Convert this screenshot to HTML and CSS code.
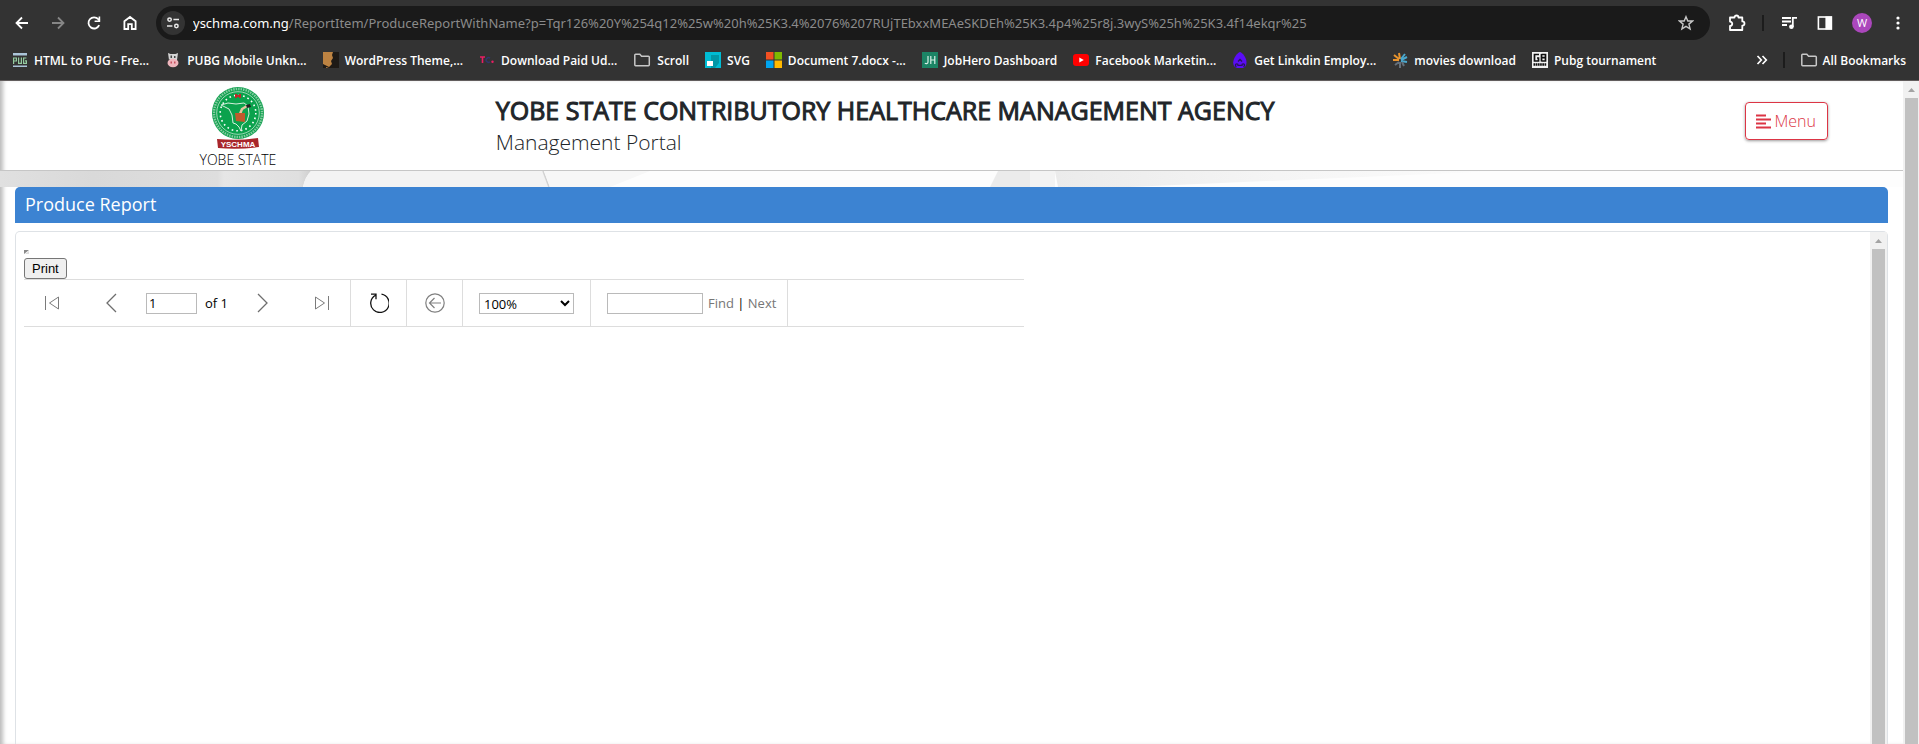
FILE: index.html
```html
<!DOCTYPE html>
<html lang="en">
<head>
<meta charset="utf-8">
<title>Produce Report</title>
<link rel="stylesheet" href="styles.css">
</head>
<body>
<div class="chrome">
  <div class="nav-row">
    <button class="icon-btn" aria-label="Back"><svg width="16" height="16" viewBox="0 0 16 16"><path d="M14 8H3M8 2.5L2.5 8L8 13.5" fill="none" stroke="#fff" stroke-width="1.8"/></svg></button>
    <button class="icon-btn" aria-label="Forward"><svg width="16" height="16" viewBox="0 0 16 16"><path d="M2 8H13M8 2.5L13.5 8L8 13.5" fill="none" stroke="#868686" stroke-width="1.8"/></svg></button>
    <button class="icon-btn" aria-label="Reload"><svg width="16" height="16" viewBox="0 0 16 16"><path d="M13.2 10.2A5.6 5.6 0 1 1 12.3 4.2L13.6 5.6" fill="none" stroke="#fff" stroke-width="1.8"/><path d="M14.2 1.4V7H8.6V5.4H12.6V1.4Z" fill="#fff"/></svg></button>
    <button class="icon-btn" aria-label="Home"><svg width="16" height="16" viewBox="0 0 16 16"><path d="M2.4 14V6.3L8 2L13.6 6.3V14H9.8V9.2H6.2V14Z" fill="none" stroke="#fff" stroke-width="1.8"/></svg></button>
    <div class="omnibox">
      <button class="site-info" aria-label="Site information"><svg width="14" height="14" viewBox="0 0 14 14" fill="none" stroke="#e8e8e8" stroke-width="1.5"><circle cx="3.6" cy="3.6" r="1.7"/><path d="M7.4 3.6H13M1 10H6.4"/><circle cx="10.4" cy="10" r="1.7"/></svg></button>
      <div class="url" role="textbox" aria-label="Address"><span class="host">yschma.com.ng</span>/ReportItem/ProduceReportWithName?p=Tqr126%20Y%254q12%25w%20h%25K3.4%2076%207RUjTEbxxMEAeSKDEh%25K3.4p4%25r8j.3wyS%25h%25K3.4f14ekqr%25</div>
      <button class="star" aria-label="Bookmark this page"><svg width="16" height="16" viewBox="0 0 16 16"><path d="M8 1.7L9.8 6H14.6L10.9 9.1L12.1 13.9L8 11.3L3.9 13.9L5.1 9.1L1.4 6H6.2Z" fill="none" stroke="#c7c7c7" stroke-width="1.4"/></svg></button>
    </div>
    <div class="actions">
      <button class="action" aria-label="Extensions"><svg width="18" height="18" viewBox="0 0 18 18"><path d="M2 3.5H6.5C6.5 .8 10.5 .8 10.5 3.5H14.3V7.4C17.2 7.4 17.2 11.6 14.3 11.6V16H2V12C5 12 5 7.6 2 7.6Z" fill="none" stroke="#fff" stroke-width="1.8" stroke-linejoin="round"/></svg></button>
      <span class="rule"></span>
      <button class="action" aria-label="Media"><svg width="18" height="18" viewBox="0 0 18 18"><path d="M2 4H11M2 7.5H11M2 11H7" stroke="#fff" stroke-width="1.8"/><path d="M12.8 13V3.9H17" fill="none" stroke="#fff" stroke-width="1.8"/><circle cx="11.4" cy="12.8" r="2.3" fill="#fff"/></svg></button>
      <button class="action" aria-label="Side panel"><svg width="18" height="18" viewBox="0 0 18 18"><rect x="2.4" y="3" width="13" height="12" fill="none" stroke="#fff" stroke-width="1.6"/><path d="M9.4 2.5H16V15.5H9.4Z" fill="#fff"/></svg></button>
      <button class="avatar" aria-label="Profile">W</button>
      <button class="dots" aria-label="Browser menu"><svg width="16" height="16" viewBox="0 0 16 16" fill="#fff"><circle cx="8" cy="3" r="1.6"/><circle cx="8" cy="8" r="1.6"/><circle cx="8" cy="13" r="1.6"/></svg></button>
    </div>
  </div>
  <nav class="bookmarks" aria-label="Bookmarks">
    <a class="bm" href="#"><svg width="16" height="16" viewBox="0 0 16 16"><path d="M1 1H15V3.500H1ZM1 13.600H15V15H1Z" fill="#abc4d8"/><path d="M1.600 12V6H4.400V9H1.600M6.600 5.500V11.400H9.400V5.500M14.400 6H11.600V11.400H14.400V8.800H13" fill="none" stroke="#94cba0" stroke-width="1.200"/></svg><span>HTML to PUG - Fre...</span></a>
    <a class="bm" href="#"><svg width="16" height="16" viewBox="0 0 16 16"><path d="M3 1L5.500 2H10.500L13 1L12 8H4Z" fill="#d4d4d4"/><path d="M5.500 3.500H7V6H5.500ZM9 4H10.500V6H9ZM3 7H4.500V9H3Z" fill="#444"/><ellipse cx="8" cy="11" rx="5.500" ry="4.200" fill="#efb6bd"/><path d="M5.500 9.500H7V11.500H5.500ZM9 9.500H10.500V11.500H9Z" fill="#c84f5e"/></svg><span>PUBG Mobile Unkn...</span></a>
    <a class="bm" href="#"><svg width="16" height="16" viewBox="0 0 16 16"><path d="M0 0H16V16H0Z" fill="#1e1a16"/><path d="M0 0H10L9 3L10 6L8 9L9 12L6 15L0 12Z" fill="#bd8342"/><path d="M3 15L6 16H3Z" fill="#bd8342"/></svg><span>WordPress Theme,...</span></a>
    <a class="bm" href="#"><svg width="16" height="16" viewBox="0 0 16 16"><path d="M1 5H6M3.500 5V11" stroke="#e91e63" stroke-width="1.600"/><path d="M11 6.300A2.300 2.300 0 1 0 11 9.700" fill="none" stroke="#30376e" stroke-width="1.500"/><circle cx="13.500" cy="9.700" r="1.200" fill="#e91e63"/></svg><span>Download Paid Ud...</span></a>
    <a class="bm" href="#"><svg width="18" height="16" viewBox="0 0 18 16"><path d="M1.800 3C1.800 2.500 2 2.200 2.600 2.200H6.800L8.600 4.200H15.400C16 4.200 16.300 4.500 16.300 5V12.800C16.300 13.400 16 13.700 15.400 13.700H2.600C2 13.700 1.800 13.400 1.800 12.800Z" fill="none" stroke="#c7c7c7" stroke-width="1.500"/></svg><span>Scroll</span></a>
    <a class="bm" href="#"><svg width="16" height="16" viewBox="0 0 16 16"><path d="M0 0H16V16H0Z" fill="#00bcd4"/><path d="M6 3H14V11L10 16H6Z" fill="#0097a7"/><path d="M2 9H8V14H2Z" fill="#fff"/></svg><span>SVG</span></a>
    <a class="bm" href="#"><svg width="16" height="16" viewBox="0 0 16 16"><path d="M0 0H7.500V7.500H0Z" fill="#f25022"/><path d="M8.500 0H16V7.500H8.500Z" fill="#7fba00"/><path d="M0 8.500H7.500V16H0Z" fill="#00a4ef"/><path d="M8.500 8.500H16V16H8.500Z" fill="#ffb900"/></svg><span>Document 7.docx -...</span></a>
    <a class="bm" href="#"><svg width="16" height="16" viewBox="0 0 16 16"><path d="M0 0H16V16H0Z" fill="#1c8465"/><path d="M6 4V10C6 12 3.500 12 3 11M8.800 4V12M12.800 4V12M8.800 8H12.800" fill="none" stroke="#d8efe6" stroke-width="1.200"/></svg><span>JobHero Dashboard</span></a>
    <a class="bm" href="#"><svg width="16" height="16" viewBox="0 0 16 16"><rect y="2" width="16" height="12" rx="3" fill="#f00"/><path d="M6.300 5.500L10.800 8L6.300 10.500Z" fill="#fff"/></svg><span>Facebook Marketin...</span></a>
    <a class="bm" href="#"><svg width="16" height="16" viewBox="0 0 16 16"><path d="M8 0C11 1 14.500 6 14.500 10.500C14.500 13.500 13 15.500 11 16H5C2.500 15.500 1.200 13.500 1.200 10.500C1.500 6 5 1 8 0Z" fill="#5b0df5"/><path d="M4.500 14.500A1.300 1.300 0 1 1 6 13.300H10A1.300 1.300 0 1 1 11.400 14.500M6 9.500L8 7.500L10 9.500" fill="none" stroke="#29135e" stroke-width="1.300"/></svg><span>Get Linkdin Employ...</span></a>
    <a class="bm" href="#"><svg width="16" height="16" viewBox="0 0 16 16" fill="none" stroke-width="2"><path d="M8 7L7 1M7 7L2 3M7 8H1" stroke="#e9942e"/><path d="M9 7L13 2M9 8L15 5M9 9L15 10" stroke="#4aa9cf"/><path d="M7 10L3 13M8 10V16M10 10L12 14" stroke="#65707b"/></svg><span>movies download</span></a>
    <a class="bm" href="#"><svg width="16" height="16" viewBox="0 0 16 16"><path d="M0 0H16V16H0Z" fill="#f2f2f2"/><path d="M7 2.500H2.500V9H6.500V6H5M9.500 2V9.500M9.500 2.500H13.500V9H9.500M9.500 5.700H13.500" fill="none" stroke="#111" stroke-width="1.700"/><path d="M1.500 12.500H14.500" stroke="#111" stroke-width="2.500" stroke-dasharray="1.700 .5"/></svg><span>Pubg tournament</span></a>
    <span class="bm-end">
      <button class="more" aria-label="More bookmarks"><svg width="12" height="10" viewBox="0 0 12 10"><path d="M1.500 1L5.300 5L1.500 9M6.500 1L10.300 5L6.500 9" fill="none" stroke="#fff" stroke-width="1.700"/></svg></button>
      <span class="rule"></span>
      <a class="bm" href="#"><svg width="18" height="16" viewBox="0 0 18 16"><path d="M1.800 3C1.800 2.500 2 2.200 2.600 2.200H6.800L8.600 4.200H15.400C16 4.200 16.300 4.500 16.300 5V12.800C16.300 13.400 16 13.700 15.400 13.700H2.600C2 13.700 1.800 13.400 1.800 12.800Z" fill="none" stroke="#c7c7c7" stroke-width="1.500"/></svg><span>All Bookmarks</span></a>
    </span>
  </nav>
</div>
<div class="viewport">
  <div class="page">
    <header class="header">
      <div class="brand">
        <svg width="54" height="64" viewBox="0 0 54 64">
          <circle cx="27" cy="27" r="26" fill="#12a150"/>
          <circle cx="27" cy="27" r="24" fill="none" stroke="#84cba0" stroke-width="2.400" stroke-dasharray="1.500 1"/>
          <circle cx="27" cy="27" r="21.300" fill="#0ba24d" stroke="#d6eddc" stroke-width=".7"/>
          <circle cx="27" cy="27" r="17.800" fill="none" stroke="#fff" stroke-width="1.600" stroke-dasharray="1.600 3.060"/>
          <path d="M10 19L17 17L25 18L33 17L37 20L38 28L36 35L31 39L30 45L28 41L25 38L22 37L21 29L18 23Z" fill="none" stroke="#d5efdc" stroke-width="1"/>
          <path d="M29 28L31 23L36 20" fill="none" stroke="#e6c69f" stroke-width="2.500"/>
          <path d="M35 19L39 18L40 21L36 22Z" fill="#222"/>
          <path d="M24 27H34V36L25 35Z" fill="#c05a2c"/>
          <path d="M25 8V12M29 8V12M25 10H29" stroke="#be2828" stroke-width="2"/>
          <path d="M6 53Q27 55 47 52L48 61Q27 64 7 62Z" fill="#a9262b"/>
          <text x="27" y="61" class="ribbon">YSCHMA</text>
        </svg>
        <span>YOBE STATE</span>
      </div>
      <div class="titles">
        <h1>YOBE STATE CONTRIBUTORY HEALTHCARE MANAGEMENT AGENCY</h1>
        <p>Management Portal</p>
      </div>
      <button class="menu"><svg width="15" height="15" viewBox="0 0 15 15"><path d="M0 1.500H10M0 5.500H15M0 9.500H10M0 13.500H15" stroke="#dc3545" stroke-width="2"/></svg>Menu</button>
    </header>
    <svg class="photo" viewBox="0 0 1903 16" preserveAspectRatio="none" aria-hidden="true">
      <defs>
        <linearGradient id="base"><stop offset="0" stop-color="#e0e0e0"/><stop offset=".3" stop-color="#d9d9d9"/><stop offset=".7" stop-color="#dedede"/><stop offset=".72" stop-color="#e6e6e6"/><stop offset=".96" stop-color="#dfdfdf"/><stop offset="1" stop-color="#cfcfcf"/></linearGradient>
        <linearGradient id="grey"><stop offset="0" stop-color="#ebebeb"/><stop offset=".5" stop-color="#f5f5f5"/><stop offset="1" stop-color="#fcfcfc"/></linearGradient>
      </defs>
      <path d="M0 0H1903V16H0Z" fill="#fdfdfd"/>
      <path d="M0 0H311Q305 6 303 16H0Z" fill="url(#base)"/>
      <path d="M311 0H543L549 16H303Q305 6 311 0Z" fill="#f3f3f3"/>
      <path d="M543 0L549 16" stroke="#d2d2d2" stroke-width="1.500"/>
      <path d="M544 0H650L610 16H550Z" fill="#f7f7f7"/>
      <path d="M998 0H1030V16H990Z" fill="#ebebeb"/>
      <path d="M1030 0H1055V16H1030Z" fill="#f3f3f3"/>
      <path d="M1055 0H1500L1130 16H1058Z" fill="url(#grey)"/>
    </svg>
    <main class="content">
      <h2 class="bar">Produce Report</h2>
      <section class="panel">
        <div class="report">
          <svg class="broken" width="5" height="4" viewBox="0 0 5 4"><path d="M0 0H5L0 4Z" fill="#888"/><path d="M5 1V4H1Z" fill="#ddd"/></svg>
          <button class="print">Print</button>
          <div class="toolbar">
            <div class="group pager">
              <button class="tool" aria-label="First page"><svg width="16" height="16" viewBox="0 0 16 16" fill="none" stroke="#7b7b7b"><path d="M1.500 1V15M14.500 2V14L5.500 8Z"/></svg></button>
              <div class="paging">
                <button class="tool" aria-label="Previous page"><svg width="12" height="20" viewBox="0 0 12 20" fill="none" stroke="#6e6e6e" stroke-width="1.300"><path d="M11 1L2 10L11 19"/></svg></button>
                <label class="page-no"><input value="1" aria-label="Current page"><span>of 1</span></label>
                <button class="tool" aria-label="Next page"><svg width="12" height="20" viewBox="0 0 12 20" fill="none" stroke="#6e6e6e" stroke-width="1.300"><path d="M1 1L10 10L1 19"/></svg></button>
              </div>
              <button class="tool" aria-label="Last page"><svg width="16" height="16" viewBox="0 0 16 16" fill="none" stroke="#7b7b7b"><path d="M14.500 1V15M1.500 2V14L10.500 8Z"/></svg></button>
            </div>
            <div class="group single"><button class="tool" aria-label="Refresh"><svg width="20" height="20" viewBox="0 0 20 20" fill="none" stroke="#111" stroke-width="1.300"><path d="M12.500 1.200A9.200 9.200 0 1 1 6.500 2.200M2 1.200H7V6.200"/></svg></button></div>
            <div class="group single"><button class="tool" aria-label="Go back"><svg width="20" height="20" viewBox="0 0 20 20" fill="none" stroke="#808080" stroke-width="1.200"><circle cx="10" cy="10" r="9.200"/><path d="M16 10H4.500M9.500 5L4.500 10L9.500 15"/></svg></button></div>
            <div class="group zoom"><select aria-label="Zoom"><option>100%</option></select></div>
            <div class="group find"><input aria-label="Find text"><span><a href="#">Find</a> | <a href="#">Next</a></span></div>
          </div>
        </div>
        <div class="scroll inner"><svg width="7" height="4" viewBox="0 0 7 4"><path d="M0 4L3.500 0L7 4Z" fill="#a3a3a3"/></svg><div class="thumb"></div></div>
      </section>
    </main>
  </div>
  <div class="scroll"><svg width="7" height="4" viewBox="0 0 7 4"><path d="M0 4L3.500 0L7 4Z" fill="#a3a3a3"/></svg><div class="thumb"></div></div>
</div>
</body>
</html>
```
FILE: styles.css
```css
* { box-sizing: border-box; }
body {
  margin: 0;
  height: 100vh;
  display: flex;
  flex-direction: column;
  overflow: hidden;
  background: #fff;
  color: #212529;
  font-family: "Open Sans", "Noto Sans", sans-serif;
}
button { margin: 0; padding: 0; border: 0; background: none; font: inherit; color: inherit; }
svg { display: block; flex: none; }
a { color: inherit; text-decoration: none; }
h1, h2, p { margin: 0; }

/* browser frame */
.chrome { background: #333; border-bottom: 1px solid #625d5d; color: #fff; }
.nav-row { display: flex; align-items: center; height: 46px; padding: 0 13px 0 4px; }
.icon-btn { width: 36px; height: 34px; display: flex; align-items: center; justify-content: center; }
.omnibox {
  flex: 1;
  display: flex;
  align-items: center;
  height: 34px;
  margin-left: 8px;
  padding: 0 16px 0 5px;
  border-radius: 17px;
  background: #1a1a1a;
}
.site-info {
  flex: none;
  width: 24px;
  height: 24px;
  border-radius: 50%;
  background: #333;
  display: flex;
  align-items: center;
  justify-content: center;
}
.url { flex: 1; margin-left: 8px; font-family: "Noto Sans", sans-serif; font-size: 13px; color: #8b8b8b; white-space: nowrap; overflow: hidden; }
.host { color: #fff; }
.actions { display: flex; align-items: center; gap: 18px; margin-left: 18px; }
.rule { width: 2px; height: 16px; background: #1c1c1c; }
.actions .rule { margin: 0 -2px; }
.avatar { width: 20px; height: 20px; border-radius: 50%; background: #ab47bc; font-size: 11px; line-height: 20px; }
.bookmarks { display: flex; align-items: center; height: 34px; padding: 0 13px 6px 12px; gap: 16px; font-size: 12px; font-weight: 600; white-space: nowrap; }
.bm { display: flex; align-items: center; gap: 6px; }
.bm-end { margin-left: auto; display: flex; align-items: center; gap: 15px; }
.bm-end .bm { gap: 5px; }

/* page */
.viewport { flex: 1; display: flex; min-height: 0; }
.page {
  flex: 1;
  min-width: 0;
  display: flex;
  flex-direction: column;
  box-shadow: inset 5px 0 4px -2px #bbb;
}
.scroll { flex: none; width: 16px; display: flex; flex-direction: column; align-items: center; background: #f1f1f1; padding: 7px 1px 0 2px; gap: 6px; }
.scroll.inner { width: 17px; padding: 7px 2px 0; }
.thumb { flex: 1; align-self: stretch; background: #c1c1c1; }
.header { display: flex; align-items: flex-start; height: 90px; border-bottom: 1px solid #c6c6c6; }
.brand { width: 25%; display: flex; flex-direction: column; align-items: center; padding-top: 5px; font-size: 14px; line-height: 20px; font-weight: 300; color: #000; }
.ribbon { font: bold 8px "Liberation Sans", sans-serif; fill: #fff; text-anchor: middle; }
.titles { flex: 1; padding: 12px 0 0 20px; }
.titles h1 { font-size: 25px; line-height: 34px; font-weight: 400; -webkit-text-stroke: 1px #212529; }
.titles p { font-size: 21px; line-height: 30px; font-weight: 300; }
.menu {
  display: flex;
  align-items: center;
  gap: 4px;
  height: 38px;
  margin: 21px 75px 0 0;
  padding: 0 11px 0 10px;
  border: 1px solid #dc3545;
  border-radius: 4px;
  color: #dc3545;
  font-size: 16px;
  font-weight: 300;
  box-shadow: 0 1px 3px #999;
}
.photo { width: 100%; height: 16px; }
.content { flex: 1; display: flex; flex-direction: column; padding: 0 15px; min-height: 0; }
.bar { height: 36px; padding-left: 10px; border-radius: 5px 5px 0 0; background: #3c83d2; color: #fff; font-size: 18px; line-height: 35px; font-weight: 400; }
.panel { flex: 1; display: flex; margin-top: 8px; border: 1px solid #dee2e6; border-bottom: 0; border-radius: 5px 5px 0 0; }
.report { flex: 1; padding: 18px 8px 0; }
.print {
  display: block;
  height: 21px;
  margin-top: 4px;
  padding: 0 7px;
  border: 1px solid #767676;
  border-radius: 3px;
  background: #efefef;
  color: #000;
  font: 13px "Liberation Sans", Arial, sans-serif;
}
.toolbar { display: flex; height: 48px; max-width: 1000px; border: solid #ddd; border-width: 1px 0; font-size: 13px; color: #000; }
.group { display: flex; align-items: center; border-right: 1px solid #ddd; }
.tool { display: flex; }
.toolbar input, .toolbar select { height: 21px; border: 1px solid #bababa; background: #fff; color: #000; font: inherit; }
.pager { width: 327px; justify-content: space-between; padding: 0 20px; }
.paging { display: flex; align-items: center; gap: 29px; }
.page-no { display: flex; align-items: center; gap: 8px; }
.page-no input { width: 51px; padding: 0 2px; }
.single { width: 56px; justify-content: center; }
.zoom { width: 128px; padding: 0 16px; }
.zoom select { width: 100%; padding: 0; }
.find { width: 197px; padding: 0 16px; gap: 5px; white-space: nowrap; }
.find input { width: 96px; }
.find a { color: #767676; }
```
